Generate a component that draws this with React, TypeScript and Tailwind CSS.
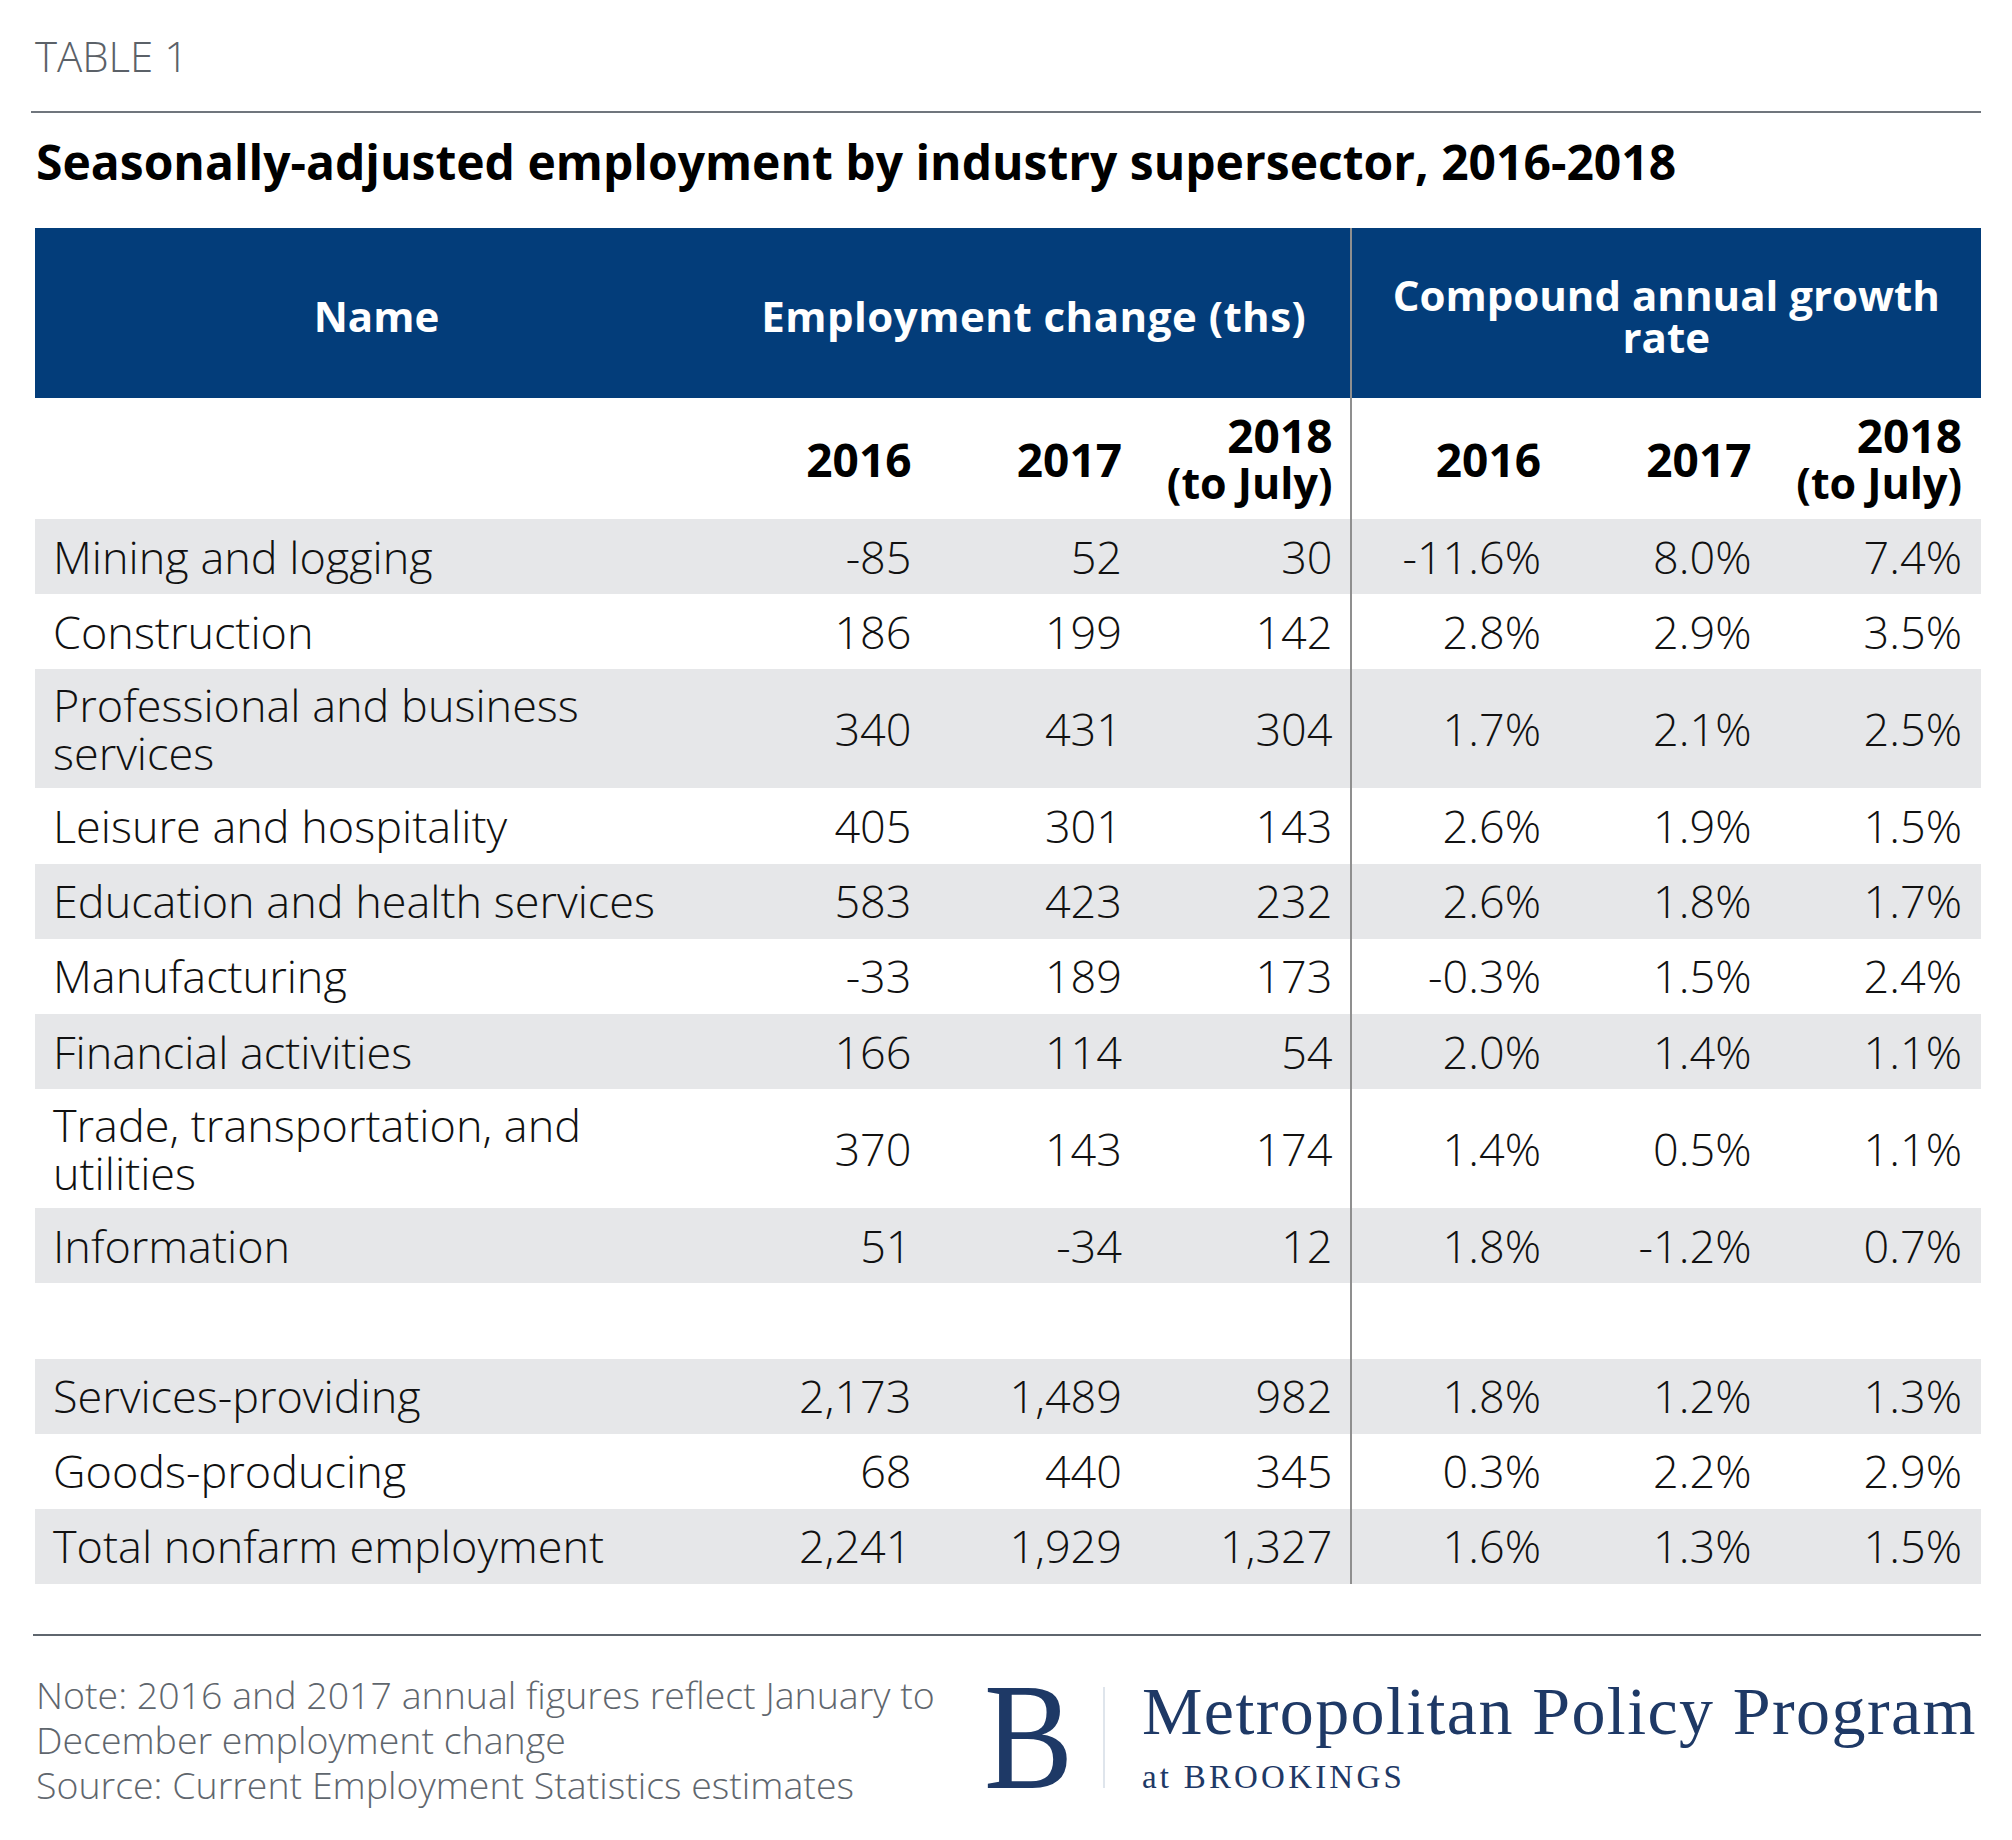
import React from "react";

type Row = { name: React.ReactNode; v: string[]; tall?: boolean; blank?: boolean };

const rows: Row[] = [
  { name: "Mining and logging", v: ["-85", "52", "30", "-11.6%", "8.0%", "7.4%"] },
  { name: "Construction", v: ["186", "199", "142", "2.8%", "2.9%", "3.5%"] },
  {
    name: (
      <>
        Professional and business
        <br />
        services
      </>
    ),
    v: ["340", "431", "304", "1.7%", "2.1%", "2.5%"],
    tall: true,
  },
  { name: "Leisure and hospitality", v: ["405", "301", "143", "2.6%", "1.9%", "1.5%"] },
  { name: "Education and health services", v: ["583", "423", "232", "2.6%", "1.8%", "1.7%"] },
  { name: "Manufacturing", v: ["-33", "189", "173", "-0.3%", "1.5%", "2.4%"] },
  { name: "Financial activities", v: ["166", "114", "54", "2.0%", "1.4%", "1.1%"] },
  {
    name: (
      <>
        Trade, transportation, and
        <br />
        utilities
      </>
    ),
    v: ["370", "143", "174", "1.4%", "0.5%", "1.1%"],
    tall: true,
  },
  { name: "Information", v: ["51", "-34", "12", "1.8%", "-1.2%", "0.7%"] },
  { name: "", v: ["", "", "", "", "", ""], blank: true },
  { name: "Services-providing", v: ["2,173", "1,489", "982", "1.8%", "1.2%", "1.3%"] },
  { name: "Goods-producing", v: ["68", "440", "345", "0.3%", "2.2%", "2.9%"] },
  { name: "Total nonfarm employment", v: ["2,241", "1,929", "1,327", "1.6%", "1.3%", "1.5%"] },
];

const gridCols = "grid grid-cols-[683px_repeat(6,210.5px)]";

function NumCell({ children, idx }: { children: React.ReactNode; idx: number }) {
  if (idx < 3) {
    return <div className="flex items-center justify-end pr-[17px] text-right">{children}</div>;
  }
  if (idx === 3) {
    return (
      <div className="flex items-center justify-end pr-[19px] text-right border-l-2 border-[#8f8f8f]">
        {children}
      </div>
    );
  }
  return <div className="flex items-center justify-end pr-[19px] text-right">{children}</div>;
}

export default function App() {
  return (
    <div className="w-[2012px] h-[1840px] bg-white font-['Open_Sans',sans-serif] pt-[35px]">
      <div className="pl-[35px] text-[42px] leading-[42px] font-light text-[#5b6168]">TABLE 1</div>
      <div className="mt-[34px] ml-[31px] w-[1950px] h-[2px] bg-[#70767d]" />
      <h1 className="mt-[25px] pl-[36px] text-[48px] leading-[48px] font-bold text-black">
        Seasonally-adjusted employment by industry supersector, 2016-2018
      </h1>

      <div className="mt-[42px] ml-[35px] w-[1946px]">
        {/* blue header */}
        <div className={`${gridCols} h-[170px] bg-[#033d7a] text-white font-bold text-[42px] leading-[42px]`}>
          <div className="flex items-center justify-center pt-[5px]">Name</div>
          <div className="col-span-3 flex items-center justify-center pt-[5px] tracking-[0.5px]">
            Employment change (ths)
          </div>
          <div className="col-span-3 flex items-center justify-center pt-[5px] text-center border-l-2 border-[#8f8f8f]">
            Compound annual growth
            <br />
            rate
          </div>
        </div>

        {/* year subheader */}
        <div className={`${gridCols} h-[121px] bg-white text-black font-bold text-[46px] leading-[46px]`}>
          <div />
          <NumCell idx={0}>2016</NumCell>
          <NumCell idx={1}>2017</NumCell>
          <NumCell idx={2}>
            <span>
              2018
              <br />
              <span className="text-[43px]">(to July)</span>
            </span>
          </NumCell>
          <NumCell idx={3}>2016</NumCell>
          <NumCell idx={4}>2017</NumCell>
          <NumCell idx={5}>
            <span>
              2018
              <br />
              <span className="text-[43px]">(to July)</span>
            </span>
          </NumCell>
        </div>

        {/* body rows */}
        {rows.map((r, i) => (
          <div
            key={i}
            className={`${gridCols} ${r.tall ? "h-[119px]" : "h-[75.2px]"} ${
              i % 2 === 0 ? "bg-[#e6e7e9]" : "bg-white"
            } text-[#111111] font-light text-[45px] leading-[48px]`}
          >
            <div className="flex items-center pl-[18px]">
              <span>{r.name}</span>
            </div>
            {r.v.map((val, j) => (
              <NumCell key={j} idx={j}>
                {val}
              </NumCell>
            ))}
          </div>
        ))}
      </div>

      <div className="mt-[50px] ml-[33px] w-[1948px] h-[2px] bg-[#5f666e]" />

      {/* footer */}
      <div className="flex items-start">
        <div className="w-[984px] pl-[36px] pt-[36px] text-[37.5px] leading-[45px] font-light text-[#5f666d] whitespace-nowrap">
          Note: 2016 and 2017 annual figures reflect January to
          <br />
          December employment change
          <br />
          Source: Current Employment Statistics estimates
        </div>
        <div className="w-[119px] pt-[24.7px]">
          <div className="text-[152px] leading-[152px] font-['Liberation_Serif',serif] text-[#1e3966] scale-x-[0.88] origin-left">
            B
          </div>
        </div>
        <div className="mt-[51px] w-[2px] h-[101px] bg-[#dfe5ec]" />
        <div className="ml-[37px] pt-[41px] font-['Liberation_Serif',serif] text-[#1e3966]">
          <div className="text-[68px] leading-[68px] tracking-[1.4px] whitespace-nowrap">Metropolitan Policy Program</div>
          <div className="mt-[16px] text-[33px] leading-[33px] tracking-[3.2px] whitespace-nowrap">at BROOKINGS</div>
        </div>
      </div>
    </div>
  );
}
